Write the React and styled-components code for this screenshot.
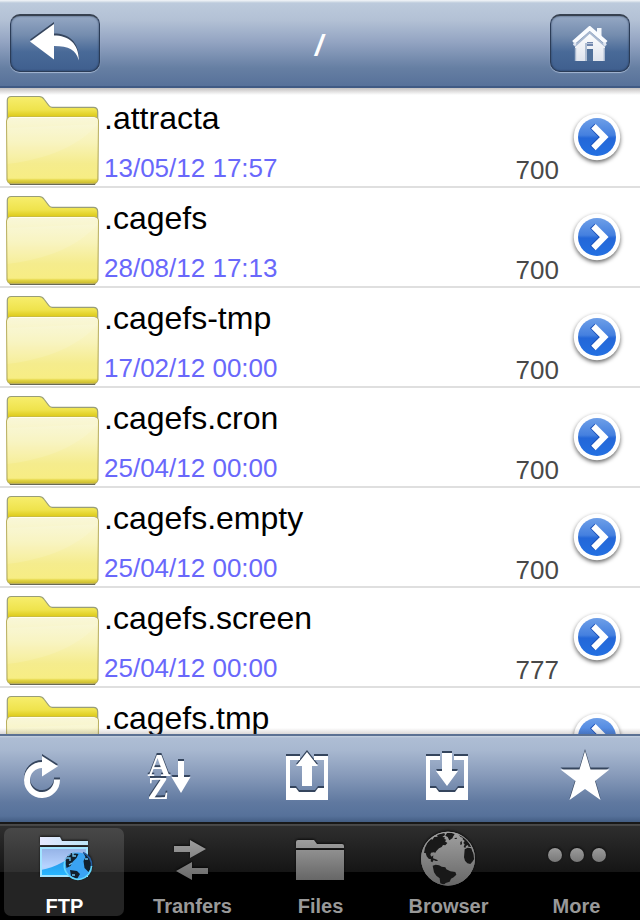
import React from 'react'
import styled, { createGlobalStyle } from "styled-components";

const folders = [
  { name: ".attracta", date: "13/05/12 17:57", mode: "700" },
  { name: ".cagefs", date: "28/08/12 17:13", mode: "700" },
  { name: ".cagefs-tmp", date: "17/02/12 00:00", mode: "700" },
  { name: ".cagefs.cron", date: "25/04/12 00:00", mode: "700" },
  { name: ".cagefs.empty", date: "25/04/12 00:00", mode: "700" },
  { name: ".cagefs.screen", date: "25/04/12 00:00", mode: "777" },
  { name: ".cagefs.tmp" },
];

const BackIcon = () => (
  <IconSvg width="50" height="42" viewBox="0 0 50 42">
    <path d="M0 18.5 24 1v11.5C38 12.5 49 20 48.8 37.5 46 27 39 23 24 23v13.5Z" fill="#fff" />
  </IconSvg>
);

const HomeIcon = () => (
  <svg width="38" height="36" viewBox="0 0 38 36">
    <defs>
      <linearGradient id="house" x1="0" y1="0" x2="0" y2="1">
        <stop offset="0" stopColor="#fff" />
        <stop offset="1" stopColor="#dfe4ed" />
      </linearGradient>
    </defs>
    <path d="M26 2h4.500v12L26 10Z" fill="#f5f8fc" />
    <path d="M4 20 18.7 6 34 20v15H4Z" fill="url(#house)" />
    <path d="M4.500 22v13M33.300 22v13" stroke="#a9b8cf" strokeWidth="1.400" />
    <path d="M3.500 20.200 18.700 6.600 34.500 20.200" fill="none" stroke="#a9b9d1" strokeWidth="2" />
    <path d="M2.500 16.600 18.700 2.200 35.200 16.600" fill="none" stroke="#fafcff" strokeWidth="4" />
    <path d="M2.500 17.500 5 18.500M35.200 17.500 32.500 18.500" stroke="#dfe6f1" strokeWidth="3" />
    <path d="M16 16h6v4h-6Z" fill="#7187ad" />
    <path d="M16 17.500h6" stroke="#b9c5d9" strokeWidth="1" />
    <path d="M16 23h6v12h-6Z" fill="#50709a" />
    <path d="M15 17v18" stroke="#a9b8cf" strokeWidth="1.800" />
  </svg>
);

const FolderIcon = () => (
  <svg width="99" height="98" viewBox="0 0 99 98">
    <defs>
      <linearGradient id="folderBack" x1="0" y1="0" x2="0" y2="1">
        <stop offset="0" stopColor="#f7ee6e" />
        <stop offset=".16" stopColor="#efe34c" />
        <stop offset=".23" stopColor="#dfcd20" />
        <stop offset="1" stopColor="#c3b327" />
      </linearGradient>
      <linearGradient id="folderFront" x1="0" y1="0" x2="0" y2="1">
        <stop offset="0" stopColor="#f9f7d9" />
        <stop offset=".38" stopColor="#f8f3b9" />
        <stop offset=".7" stopColor="#f5ec8d" />
        <stop offset=".92" stopColor="#f7ed84" />
        <stop offset=".95" stopColor="#e3d545" />
        <stop offset="1" stopColor="#c9b92b" />
      </linearGradient>
    </defs>
    <path d="M8 92h89l-2 5H10Z" fill="#696955" />
    <path d="M7.300 92V12.500q0-4 4-4h28q3 0 5 3l4.500 6q1.300 1.800 3.600 1.800h41q4.300 0 4.300 4.500v68Z" fill="url(#folderBack)" stroke="#999e79" strokeWidth="1.2" />
    <path d="M6.500 33q0-4 4-4h83.700q4.300 0 4.300 4l-.7 59q-.2 3.500-4 3.500H11q-3.700 0-3.900-3.500Z" fill="url(#folderFront)" stroke="#b9af5e" strokeWidth="1" />
    <path d="M9 30q1-.5 3-.5h80q2.500 0 3.500.5" fill="none" stroke="#fffef0" strokeWidth="1" />
    <path d="M7.600 76V40l90-4C80 57 49 71 7.600 76Z" fill="#fff" opacity=".12" />
  </svg>
);

const ChevronIcon = () => (
  <svg width="60" height="60" viewBox="0 0 60 60">
    <defs>
      <linearGradient id="blueDisc" x1="0" y1="0" x2="0" y2="1">
        <stop offset="0" stopColor="#6e9fe8" />
        <stop offset=".45" stopColor="#4580df" />
        <stop offset=".53" stopColor="#2467d8" />
        <stop offset="1" stopColor="#2470e2" />
      </linearGradient>
    </defs>
    <DiscRing cx="30" cy="30" r="23.200" fill="#fff" />
    <circle cx="30" cy="30" r="19" fill="url(#blueDisc)" />
    <path d="m25.300 19 10.700 11-10.700 11" fill="none" stroke="#1a4fb8" strokeWidth="6.500" />
    <path d="m26.400 19.300 10.800 10.800-10.800 10.900" fill="none" stroke="#fff" strokeWidth="6.200" />
  </svg>
);

const RefreshIcon = () => (
  <IconSvg width="40" height="50" viewBox="0 0 40 50">
    <path d="M35 29.500A15 15 0 1 1 20 15" fill="none" stroke="#fff" strokeWidth="6" />
    <path d="M20 6 36 16.300 20 26.500Z" fill="#fff" />
  </IconSvg>
);

const SortIcon = () => (
  <IconSvg width="44" height="50" viewBox="0 0 44 50">
    <SortLetter x="-.5" y="26">A</SortLetter>
    <SortLetter x="-.5" y="49">Z</SortLetter>
    <path d="M30 11h6v16h6.500L33 43 23.500 27H30Z" fill="#fff" />
  </IconSvg>
);

const TrayIcon = ({ down }) => (
  <IconSvg width="42" height="50" viewBox="0 0 42 50">
    <path d="M0 6h14v4H4v28h6l3 4h16l3-4h6V10H28V6h14v44H0Z" fill="#fff" />
    {down
      ? <path d="M16 3h10v18h6L21 36 10 21h6Z" fill="#fff" />
      : <path d="m21 2 11 14h-6v20H16V16h-6Z" fill="#fff" />}
  </IconSvg>
);

const StarIcon = () => (
  <IconSvg width="50" height="50" viewBox="0 0 50 50">
    <path d="m25 1 5.500 18.500H49.500L35 31l5.500 19L25 39 9.500 50 15.500 31 .5 19.500h19Z" fill="#fff" />
  </IconSvg>
);

const Continents = ({ fill }) => (
  <g fill={fill}>
    <path d="M32 84 27 84 30 68 38 52 48 42 52 44 58 36 68 35 66 29 76 26 88 24 90 30 82 36 90 37 88 42 94 44 90 49 97 54 91 61 84 60 80 66 72 70 64 78 61 83 56 82 48 83 46 90 50 95 55 91 54 100 60 102 66 104 69 108 62 108 56 105 52 112 47 109 48 103 41 101 35 94Z" />
    <path d="M53 122 62 119 72 121 80 125 91 127 94 133 106 139 121 141 124 149 116 157 108 161 104 170 92 174 86 180 76 176 74 160 64 152 57 142Z" />
    <path d="M149 73 158 68 169 70 172 79 178 91 178 102 172 110 166 117 157 115 150 107 147 97Z" />
    <path d="M96 24 108 23 119 27 115 34 112 40 103 46 98 36 91 32Z" />
    <path d="M130 28 142 33 151 40 160 49 165 57 169 66 160 65 159 60 153 63 151 69 146 66 149 58 145 54 149 48 143 43 144 38 137 36Z" />
    <path d="M119 39 126 38 125 42 119 42ZM136 51 140 48 141 58 136 60Z" />
  </g>
);

const FtpIcon = () => (
  <TabSvg width="60" height="50" viewBox="34 832 60 50">
    <defs>
      <linearGradient id="ftpFolder" x1="0" y1="0" x2="0" y2="1">
        <stop offset="0" stopColor="#94b2e6" />
        <stop offset=".65" stopColor="#b7d3ff" />
        <stop offset="1" stopColor="#9fd3ff" />
      </linearGradient>
      <linearGradient id="ftpWave" x1="0" y1="0" x2="0" y2="1">
        <stop offset="0" stopColor="#2d89e0" />
        <stop offset="1" stopColor="#27b8ff" />
      </linearGradient>
      <linearGradient id="ftpTab" x1="0" y1="0" x2="1" y2="0">
        <stop offset="0" stopColor="#e6e9ff" />
        <stop offset="1" stopColor="#bde4f6" />
      </linearGradient>
    </defs>
    <path d="M40 836h20l2 4h26v4H40Z" fill="url(#ftpTab)" />
    <path d="M41 847h46v28H41Z" fill="url(#ftpFolder)" />
    <path d="M41 869q11-2 20-7 13-7 26-10v23H41Z" fill="url(#ftpWave)" />
    <path d="M41 847h46v28H41Z" fill="none" stroke="#a2e4ff" strokeWidth="2" />
    <circle cx="78" cy="865" r="13.500" fill="#3aa3f3" />
    <path d="M65.500 861q0-6 6-9l7 1-2 4-4 4-2 4-4 2ZM83 851l4 3q5 5 4.500 12l-3 5-4-4-1-7 2-4ZM70 869l7 1 3 3-3 5-6-3Z" fill="#12202d" />
    <path d="M67 857h3v3M73 852v3h3M69 864l3-2M85 858h3M72 874h3" fill="none" stroke="#6fc4f2" strokeWidth="1.300" />
    <path d="M83 851.500A13.500 13.500 0 0 1 91.500 866" fill="none" stroke="#245c9e" strokeWidth="1.600" />
    <path d="M91.500 865A13.500 13.500 0 0 1 66 871 13.500 13.500 0 0 1 65 860" fill="none" stroke="#63d8fd" strokeWidth="1.600" />
    <path d="M65 859a13.500 13.500 0 0 1 10-7.500" fill="none" stroke="#74b8e8" strokeWidth="1.400" strokeDasharray="3 2" />
  </TabSvg>
);

const GreyGradient = ({ id, top, bottom }) => (
  <defs>
    <linearGradient id={id} gradientUnits="userSpaceOnUse" x1="0" y1={top} x2="0" y2={bottom}>
      <stop offset="0" stopColor="#a0a0a0" />
      <stop offset="1" stopColor="#646464" />
    </linearGradient>
  </defs>
);

const TransfersIcon = () => (
  <TabSvg width="60" height="50" viewBox="162 833 60 50">
    <GreyGradient id="greyArrows" top="838" bottom="884" />
    <path d="M174 846h16v-6l16 9-16 9v-6h-16ZM208 868v6h-16v6l-16-9 16-9v6Z" fill="url(#greyArrows)" />
  </TabSvg>
);

const FilesIcon = () => (
  <TabSvg width="60" height="50" viewBox="290 833 60 50">
    <GreyGradient id="greyFolder" top="838" bottom="882" />
    <path d="M296 842q0-2 2-2h16l3 4h25q2 0 2 2v2h-48ZM296 850h48v30h-48Z" fill="url(#greyFolder)" />
  </TabSvg>
);

const GlobeIcon = () => (
  <TabSvg width="66" height="66" viewBox="0 0 198 198">
    <GreyGradient id="greyGlobe" top="20" bottom="190" />
    <circle cx="99" cy="101" r="81" fill="url(#greyGlobe)" />
    <Continents fill="#191919" />
    <circle cx="99" cy="101" r="79.500" fill="none" stroke="url(#greyGlobe)" strokeWidth="3" />
  </TabSvg>
);

const MoreIcon = () => (
  <TabSvg width="60" height="50" viewBox="546 833 60 50">
    <GreyGradient id="greyDots" top="846" bottom="870" />
    <g fill="url(#greyDots)">
      <circle cx="555" cy="855" r="7" />
      <circle cx="577" cy="855" r="7" />
      <circle cx="599" cy="855" r="7" />
    </g>
  </TabSvg>
);

const tabs = [
  { label: "FTP", icon: <FtpIcon />, active: true },
  { label: "Tranfers", icon: <TransfersIcon /> },
  { label: "Files", icon: <FilesIcon /> },
  { label: "Browser", icon: <GlobeIcon /> },
  { label: "More", icon: <MoreIcon /> },
];

const App = () => {
  return (
    <Screen>
      <GlobalStyle />
      <Header>
        <HeaderButton $width={90}><BackIcon /></HeaderButton>
        <Title>/</Title>
        <HeaderButton $width={80}><HomeIcon /></HeaderButton>
      </Header>
      <List>
        {folders.map((folder) => (
          <Row key={folder.name}>
            <FolderIcon />
            <Info>
              <Name>{folder.name}</Name>
              <FolderDate>{folder.date}</FolderDate>
            </Info>
            <Mode>{folder.mode}</Mode>
            <Disclosure><ChevronIcon /></Disclosure>
          </Row>
        ))}
      </List>
      <Toolbar>
        <ToolButton><RefreshIcon /></ToolButton>
        <ToolButton><SortIcon /></ToolButton>
        <ToolButton><TrayIcon /></ToolButton>
        <ToolButton><TrayIcon down /></ToolButton>
        <ToolButton><StarIcon /></ToolButton>
      </Toolbar>
      <TabBar>
        {tabs.map((tab) => (
          <Tab key={tab.label} $active={tab.active}>
            <TabIcon>{tab.icon}</TabIcon>
            <TabLabel $active={tab.active}>{tab.label}</TabLabel>
          </Tab>
        ))}
      </TabBar>
    </Screen>
  );
};

export default App;

const GlobalStyle = createGlobalStyle`
  * {
    box-sizing: border-box;
  }
  body {
    margin: 0;
    background: #000;
  }
  button {
    padding: 0;
    border: none;
    background: none;
    font: inherit;
  }
  svg {
    display: block;
    flex: none;
  }
`;

const Screen = styled.div`
  width: 640px;
  height: 920px;
  display: flex;
  flex-direction: column;
  overflow: hidden;
  font-family: "Liberation Sans", Arial, sans-serif;
`;

const Header = styled.header`
  flex: none;
  height: 88px;
  padding: 14px 10px 0;
  display: flex;
  align-items: flex-start;
  justify-content: space-between;
  background: linear-gradient(#f3f6f9 0, #e3e9f0 1px, #cfdae5 2px, #bccadc 3px, #b3c1d5 20px, #93a4c2 42px, #667fa3 68px, #57719a 86px);
  border-bottom: 2px solid #405a84;
`;

const HeaderButton = styled.button`
  width: ${(props) => props.$width}px;
  height: 58px;
  display: flex;
  align-items: center;
  justify-content: center;
  border: 1px solid #2b3c57;
  border-top: 2px solid #374150;
  border-radius: 10px;
  background: linear-gradient(#95a8c4, #748cae 35%, #496a98 65%, #3f5f8e);
  box-shadow: 0 1px 1px rgba(195, 210, 232, 0.7), inset 0 0 2px rgba(25, 42, 70, 0.8);
`;

const Title = styled.h1`
  margin: 15px 0 0 -12px;
  color: #fff;
  font-size: 29px;
  line-height: 34px;
  font-style: italic;
  font-weight: bold;
`;

const List = styled.main`
  height: 646px;
  overflow: hidden;
  position: relative;
  background: #fff;
  &::after {
    content: "";
    position: absolute;
    inset: 0;
    background:
      linear-gradient(rgba(70, 60, 60, 0.32), transparent) top / 100% 7px no-repeat,
      linear-gradient(transparent, rgba(70, 60, 60, 0.2)) bottom / 100% 6px no-repeat;
  }
`;

const Row = styled.div`
  height: 100px;
  padding-right: 13px;
  display: flex;
  border-bottom: 2px solid #dfdfdf;
`;

const Info = styled.div`
  flex: 1;
  padding: 12px 0 0 5px;
`;

const Name = styled.div`
  color: #000;
  font-size: 32px;
  line-height: 36px;
`;

const FolderDate = styled.div`
  margin-top: 17px;
  color: #6968fb;
  font-size: 26px;
  line-height: 30px;
`;

const Mode = styled.div`
  align-self: flex-end;
  margin-right: 8px;
  padding-bottom: 1px;
  color: #484848;
  font-size: 26px;
  line-height: 30px;
`;

const Disclosure = styled.div`
  padding-top: 19px;
`;

const DiscRing = styled.circle`
  filter: drop-shadow(0 2px 2px rgba(0, 0, 0, 0.6));
`;

const Toolbar = styled.nav`
  flex: none;
  height: 88px;
  padding: 14px 0 0 22px;
  display: grid;
  grid-template-columns: 126px 138px 140px 134px 50px;
  align-items: start;
  background: linear-gradient(#c5d2e1 0, #aebdd4 2px, #a8b8d0 14px, #899cbb 38px, #6079a0 66px, #56719a 80px, #435d83 86px);
  border-top: 2px solid #5b7193;
`;

const ToolButton = styled.button`
  height: 50px;
  display: flex;
`;

const IconSvg = styled.svg`
  overflow: visible;
  filter: drop-shadow(0 -1.5px 0 #35455d);
`;

const SortLetter = styled.text`
  fill: #fff;
  font-family: "Liberation Serif", "Times New Roman", serif;
  font-size: 32px;
  font-weight: bold;
`;

const TabBar = styled.nav`
  flex: none;
  height: 98px;
  display: flex;
  border-top: 2px solid #181818;
  background: linear-gradient(#4b4b4b 0, #444 2px, #2e2e2e 2px, #151515 48px, #000 48px);
`;

const Tab = styled.button`
  width: 120px;
  height: 88px;
  margin: 4px;
  display: flex;
  flex-direction: column;
  align-items: center;
  border-radius: 7px;
  background: ${(props) => props.$active ? "linear-gradient(#484848, #303030 44px, #242424 44px, #242424)" : "none"};
`;

const TabIcon = styled.div`
  flex: none;
  height: 60px;
  display: flex;
  align-items: center;
  justify-content: center;
`;

const TabSvg = styled.svg`
  overflow: visible;
  filter: drop-shadow(0 -1px 1px rgba(0, 0, 0, 0.7));
`;

const TabLabel = styled.span`
  margin-top: 6px;
  padding-left: 1px;
  color: ${(props) => props.$active ? "#fff" : "#999"};
  font-size: 20px;
  font-weight: bold;
  line-height: 24px;
`;
